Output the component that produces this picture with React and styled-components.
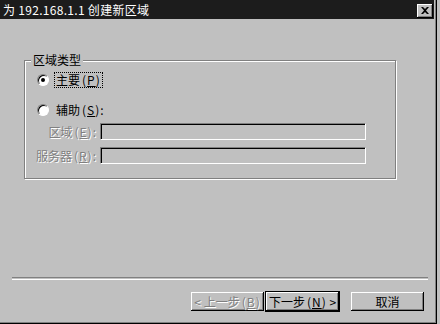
import styled, { createGlobalStyle } from 'styled-components';

const GlobalStyle = createGlobalStyle`
  html, body {
    margin: 0;
    padding: 0;
    background: #c0c0c0;
  }
  body {
    width: 440px;
    height: 324px;
    overflow: hidden;
    font-family: "Noto Sans CJK SC", "DejaVu Sans", sans-serif;
    font-size: 12px;
    color: #000;
  }
`;

const Window = styled.div`
  width: 437px;
  height: 324px;
  box-sizing: border-box;
  display: flex;
  flex-direction: column;
  border-right: 1px solid #000;
  border-bottom: 1px solid #000;
  box-shadow: inset -1px -1px 0 #808080;
  padding: 0 2px 2px 0;
`;

const TitleBar = styled.div`
  height: 19px;
  flex: none;
  display: flex;
  align-items: center;
  justify-content: space-between;
  padding: 0 1px 0 3px;
  background: #1c1c1c;
  color: #fff;
  line-height: 1;
`;

const TitleText = styled.span`
  letter-spacing: 0.3px;
`;

const CloseButton = styled.div`
  width: 16px;
  height: 14px;
  margin-top: 2px;
  display: flex;
  align-items: center;
  justify-content: center;
  background: #c0c0c0;
  box-shadow: inset -1px -1px 0 #000, inset 1px 1px 0 #fff, inset -2px -2px 0 #808080;
`;

const Body = styled.div`
  flex: 1;
  display: flex;
  flex-direction: column;
`;

const GroupBox = styled.div`
  position: relative;
  box-sizing: border-box;
  margin: 41px 0 0 24px;
  width: 372px;
  height: 119px;
  border: 1px solid #808080;
  box-shadow: 1px 1px 0 #fff, inset 1px 1px 0 #fff;
  padding: 11px 0 0 0;
  display: flex;
  flex-direction: column;
`;

const Legend = styled.span`
  position: absolute;
  top: -9px;
  left: 6px;
  padding: 0 2px;
  background: #c0c0c0;
  line-height: 16px;
`;

const RadioRow = styled.div`
  height: 16px;
  display: flex;
  align-items: center;
  gap: 5px;
  padding-left: 12px;
  margin-top: ${p => p.$gap || 0}px;
`;

const RadioCircle = styled.span`
  width: 12px;
  height: 12px;
  box-sizing: border-box;
  border-radius: 50%;
  background: #fff;
  border: 1px solid;
  border-color: #808080 #fff #fff #808080;
  box-shadow: inset 1px 1px 0 #000;
  display: flex;
  align-items: center;
  justify-content: center;

  &::after {
    content: "";
    width: 4px;
    height: 4px;
    border-radius: 50%;
    background: ${p => (p.$checked ? '#000' : 'transparent')};
  }
`;

const RadioLabel = styled.span`
  line-height: 14px;
  padding: 0 1px;
  border: 1px dotted ${p => (p.$focus ? '#000' : 'transparent')};
`;

const Key = styled.span`
  margin-left: 2px;
  letter-spacing: 1px;

  u {
    text-underline-offset: 1px;
  }
`;

const FieldRow = styled.div`
  display: grid;
  grid-template-columns: 75px 266px;
  align-items: center;
  height: 17px;
  margin-top: ${p => p.$gap}px;
`;

const FieldLabel = styled.span`
  text-align: right;
  padding-right: 3px;
  color: #808080;
  text-shadow: 1px 1px 0 #fff;
  white-space: nowrap;
`;

const Input = styled.div`
  height: 17px;
  box-sizing: border-box;
  background: #c0c0c0;
  border: 1px solid;
  border-color: #808080 #fff #fff #808080;
  box-shadow: inset 1px 1px 0 #000;
`;

const Footer = styled.div`
  margin-top: auto;
  padding-bottom: 9px;
`;

const Separator = styled.div`
  margin: 0 6px 0 12px;
  height: 1px;
  border-top: 1px solid #808080;
  border-bottom: 1px solid #fff;
`;

const ButtonRow = styled.div`
  display: flex;
  justify-content: flex-end;
  padding-right: 9px;
  margin-top: 11px;
`;

const Button = styled.div`
  width: 75px;
  height: 21px;
  box-sizing: border-box;
  display: flex;
  align-items: center;
  justify-content: center;
  margin-left: ${p => p.$gap || 0}px;
  background: #c0c0c0;
  border: 1px solid ${p => (p.$default ? '#000' : 'transparent')};
  box-shadow: inset -1px -1px 0 #000, inset 1px 1px 0 #fff, inset -2px -2px 0 #808080;
  color: ${p => (p.$disabled ? '#808080' : '#000')};
  text-shadow: ${p => (p.$disabled ? '1px 1px 0 #fff' : 'none')};
  white-space: nowrap;
  line-height: 1;
`;

export default function App() {
  return (
    <>
      <GlobalStyle />
      <Window>
        <TitleBar>
          <TitleText>为 192.168.1.1 创建新区域</TitleText>
          <CloseButton>
            <svg width="8" height="7" viewBox="0 0 8 7">
              <path d="M0 0h2l2 2 2-2h2L5 3.5 8 7H6L4 5 2 7H0l3-3.5z" fill="#000" />
            </svg>
          </CloseButton>
        </TitleBar>
        <Body>
          <GroupBox>
            <Legend>区域类型</Legend>
            <RadioRow>
              <RadioCircle $checked />
              <RadioLabel $focus>主要<Key>(<u>P</u>)</Key></RadioLabel>
            </RadioRow>
            <RadioRow $gap={14}>
              <RadioCircle />
              <RadioLabel>辅助<Key>(<u>S</u>):</Key></RadioLabel>
            </RadioRow>
            <FieldRow $gap={5}>
              <FieldLabel>区域<Key>(<u>E</u>):</Key></FieldLabel>
              <Input />
            </FieldRow>
            <FieldRow $gap={7}>
              <FieldLabel>服务器<Key>(<u>R</u>):</Key></FieldLabel>
              <Input />
            </FieldRow>
          </GroupBox>
          <Footer>
            <Separator />
            <ButtonRow>
              <Button $disabled>&lt; 上一步<Key>(<u>B</u>)</Key></Button>
              <Button $default>下一步<Key>(<u>N</u>)</Key>&nbsp;&gt;</Button>
              <Button $gap={10}>取消</Button>
            </ButtonRow>
          </Footer>
        </Body>
      </Window>
    </>
  );
}
